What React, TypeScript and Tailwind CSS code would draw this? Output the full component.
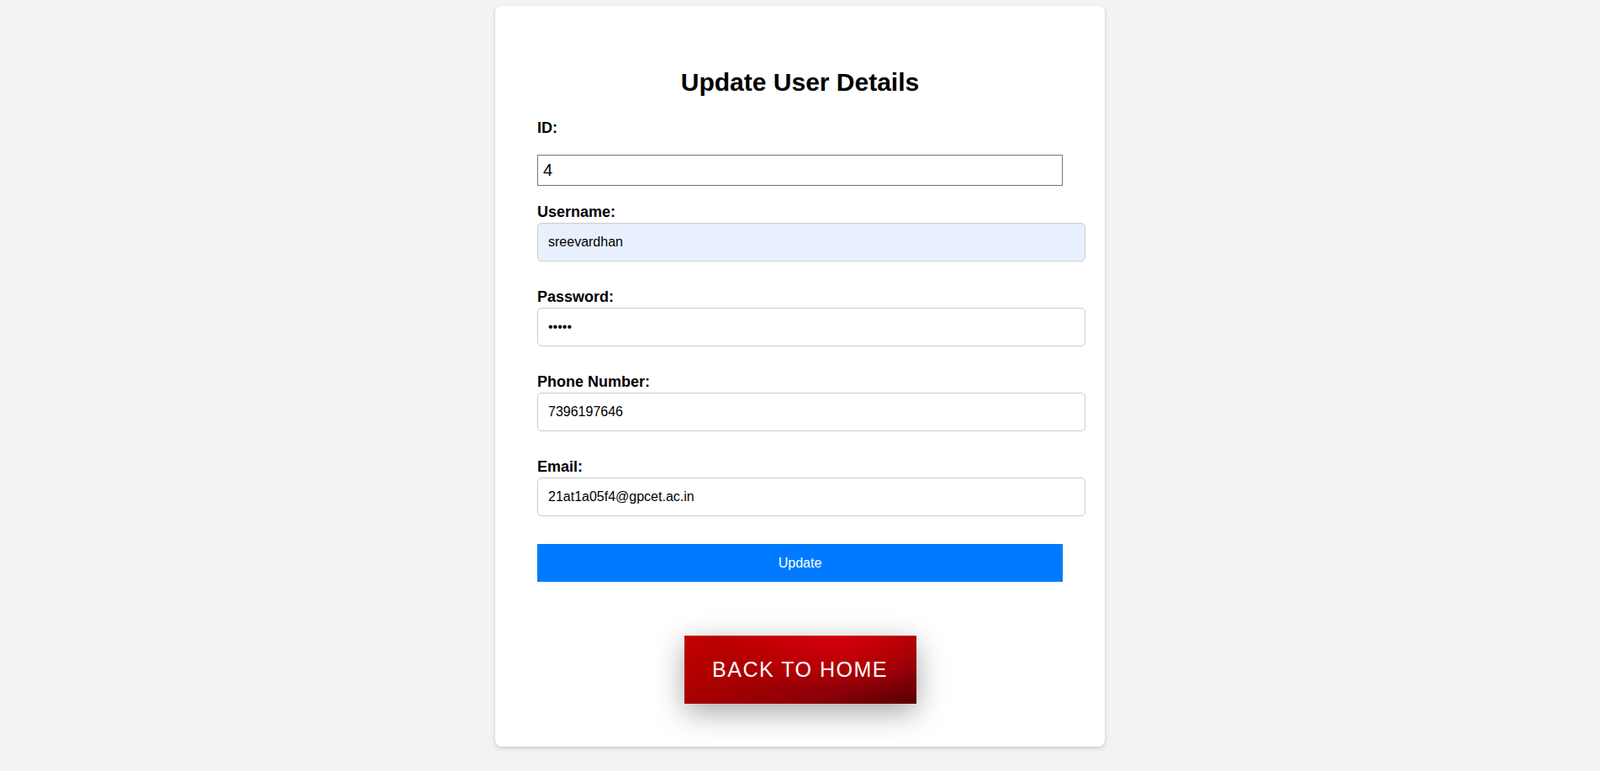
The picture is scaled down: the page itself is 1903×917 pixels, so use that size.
import React from 'react';

const font = { fontFamily: '"Liberation Sans", Arial, sans-serif' };

const Field: React.FC<{ label: string; value: string; type?: string; autofill?: boolean }> = ({ label, value, type = 'text', autofill }) => (
  <div className="mb-[32px] last:mb-[33px]">
    <label className="block text-[18px] leading-[21px] font-bold text-black mb-[2px]">{label}</label>
    <input
      type={type}
      defaultValue={value}
      className={`block w-[652px] h-[46px] px-[12px] text-[16px] text-black border border-[#cccccc] rounded-[5px] outline-none ${autofill ? 'bg-[#e8f0fe]' : 'bg-white'}`}
    />
  </div>
);

const App: React.FC = () => {
  return (
    <div className="min-h-screen bg-[#f3f3f3] pt-[7px]" style={font}>
      <div className="w-[725px] mx-auto bg-white rounded-[8px] shadow-[0_2px_5px_rgba(0,0,0,0.18)] px-[50px] pt-[74px] pb-[51px]">
        <h2 className="text-[30px] leading-[34px] font-bold text-center text-black">Update User Details</h2>

        {/* ID - plain browser input */}
        <label className="block mt-[27px] text-[18px] leading-[21px] font-bold text-black">ID:</label>
        <input
          type="text"
          defaultValue="4"
          className="block mt-[21px] w-full h-[37px] px-[6px] text-[20px] text-black border border-[#767676] bg-white outline-none"
        />

        <div className="mt-[21px]">
          <Field label="Username:" value="sreevardhan" autofill />
          <Field label="Password:" value="12345" type="password" />
          <Field label="Phone Number:" value="7396197646" />
          <Field label="Email:" value="21at1a05f4@gpcet.ac.in" />
        </div>

        <button className="block w-full h-[45px] bg-[#007bff] text-white text-[16px]">Update</button>

        <div className="flex justify-center mt-[64px]">
          <button className="w-[276px] h-[81px] text-white text-[25px] tracking-[1.5px] uppercase bg-[radial-gradient(ellipse_at_65%_0%,#d4000a_0%,rgba(212,0,10,0)_55%),linear-gradient(to_bottom_right,#c40000_0%,#a80000_45%,#8c0008_75%,#560000_100%)] shadow-[0_10px_35px_rgba(0,0,0,0.35)]">
            Back to Home
          </button>
        </div>
      </div>
    </div>
  );
};

export default App;
